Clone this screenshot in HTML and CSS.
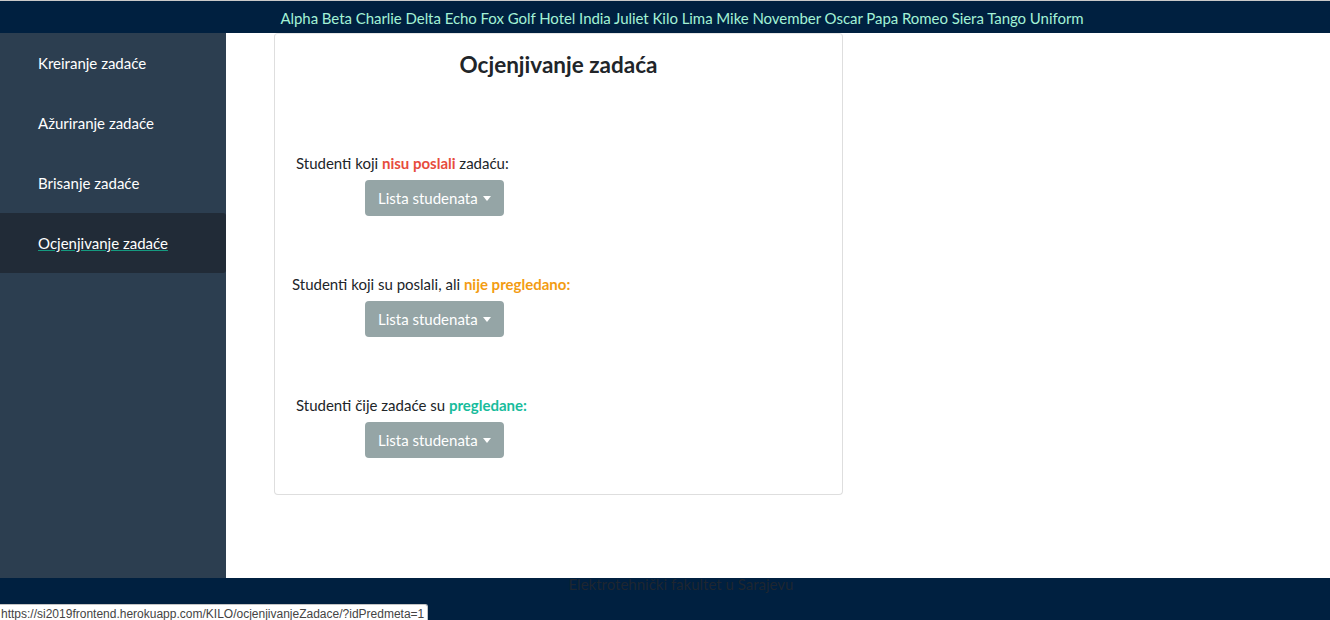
FILE: index.html
```html
<!DOCTYPE html>
<html lang="bs">
<head>
<meta charset="utf-8">
<title>Ocjenjivanje zadaća</title>
<link rel="stylesheet" href="styles.css">
</head>
<body>
<header class="topbar">Alpha Beta Charlie Delta Echo Fox Golf Hotel India Juliet Kilo Lima Mike November Oscar Papa Romeo Siera Tango Uniform</header>
<div class="main">
  <nav class="sidebar">
    <a class="nav-item" href="#">Kreiranje zadaće</a>
    <a class="nav-item" href="#">Ažuriranje zadaće</a>
    <a class="nav-item" href="#">Brisanje zadaće</a>
    <a class="nav-item active" href="#"><span class="hover">Ocjenjivanje zadaće</span></a>
  </nav>
  <section class="content">
    <div class="card">
      <h4 class="card-title">Ocjenjivanje zadaća</h4>
      <div class="groups">
        <div class="group">
          <div class="label pad-a">Studenti koji <b class="red">nisu poslali</b> zadaću:</div>
          <button class="btn">Lista studenata<span class="caret"></span></button>
        </div>
        <div class="group">
          <div class="label pad-b">Studenti koji su poslali, ali <b class="orange">nije pregledano:</b></div>
          <button class="btn">Lista studenata<span class="caret"></span></button>
        </div>
        <div class="group">
          <div class="label pad-a">Studenti čije zadaće su <b class="green">pregledane:</b></div>
          <button class="btn">Lista studenata<span class="caret"></span></button>
        </div>
      </div>
    </div>
  </section>
</div>
<footer class="footer"><span class="footer-text">Elektrotehnički fakultet u Sarajevu</span></footer>
<div class="status">https://si2019frontend.herokuapp.com/KILO/ocjenjivanjeZadace/?idPredmeta=1</div>
</body>
</html>
```

FILE: styles.css
```css
html, body {
  margin: 0;
  padding: 0;
  height: 620px;
  overflow: hidden;
}
body {
  font-family: Lato, "Open Sans", sans-serif;
  font-size: 15px;
  color: #212529;
  background: #fff;
  position: relative;
}
.topbar {
  height: 32px;
  border-top: 1px solid #c9c9c9;
  background: #002040;
  color: #a3f2d6;
  font-size: 15px;
  line-height: 34px;
  text-align: center;
  padding-left: 34px;
  letter-spacing: -0.05px;
}
.main {
  display: flex;
  height: 545px;
}
.sidebar {
  width: 226px;
  flex: none;
  background: #2c3e50;
  display: flex;
  flex-direction: column;
}
.nav-item {
  display: block;
  height: 60px;
  line-height: 60px;
  padding-left: 38px;
  color: #fff;
  text-decoration: none;
  font-size: 15px;
}
.nav-item.active {
  background: #212b37;
  border-radius: 0 3px 3px 0;
}
.hover {
  text-decoration: underline;
  text-decoration-color: #159a80;
}
.content {
  flex: 1;
  padding-left: 48px;
}
.card {
  width: 567px;
  border: 1px solid #dedede;
  border-top-color: #e6e6e6;
  border-radius: 4px;
  padding-top: 17px;
  height: 443px;
}
.card-title {
  margin: 0;
  text-align: center;
  font-size: 22.5px;
  line-height: 27px;
  font-weight: 700;
  color: #212529;
}
.groups {
  margin-top: 74px;
  display: flex;
  flex-direction: column;
  gap: 57px;
}
.label {
  line-height: 22px;
  font-size: 15px;
}
.pad-a { padding-left: 21px; }
.pad-b { padding-left: 17px; }
.red { color: #e74c3c; }
.orange { color: #f39c12; }
.green { color: #18bc9c; }
.btn {
  display: flex;
  align-items: center;
  margin: 6px 0 0 90px;
  width: 139px;
  height: 36px;
  padding: 0 0 0 13px;
  border: 0;
  border-radius: 4px;
  background: #95a5a6;
  color: #fff;
  font-family: Lato, "Open Sans", sans-serif;
  font-size: 15px;
}
.caret {
  display: inline-block;
  margin-left: 5px;
  margin-top: 1px;
  border-top: 5px solid #fff;
  border-left: 4.5px solid transparent;
  border-right: 4.5px solid transparent;
}
.footer {
  height: 42px;
  background: #002040;
  text-align: center;
  padding-left: 32px;
  line-height: 12px;
}
.footer-text {
  display: inline-block;
  color: #1e2630;
  font-size: 15px;
  line-height: 12px;
  vertical-align: top;
}
.status {
  position: absolute;
  left: 0;
  bottom: 0;
  height: 15px;
  padding: 0 3px 0 1px;
  background: #fff;
  border: 1px solid #c4c4c4;
  border-left: 0;
  border-bottom: 0;
  border-top-right-radius: 3px;
  font-family: "Liberation Sans", Arial, sans-serif;
  font-size: 12px;
  line-height: 18px;
  color: #444;
  white-space: nowrap;
}
```
